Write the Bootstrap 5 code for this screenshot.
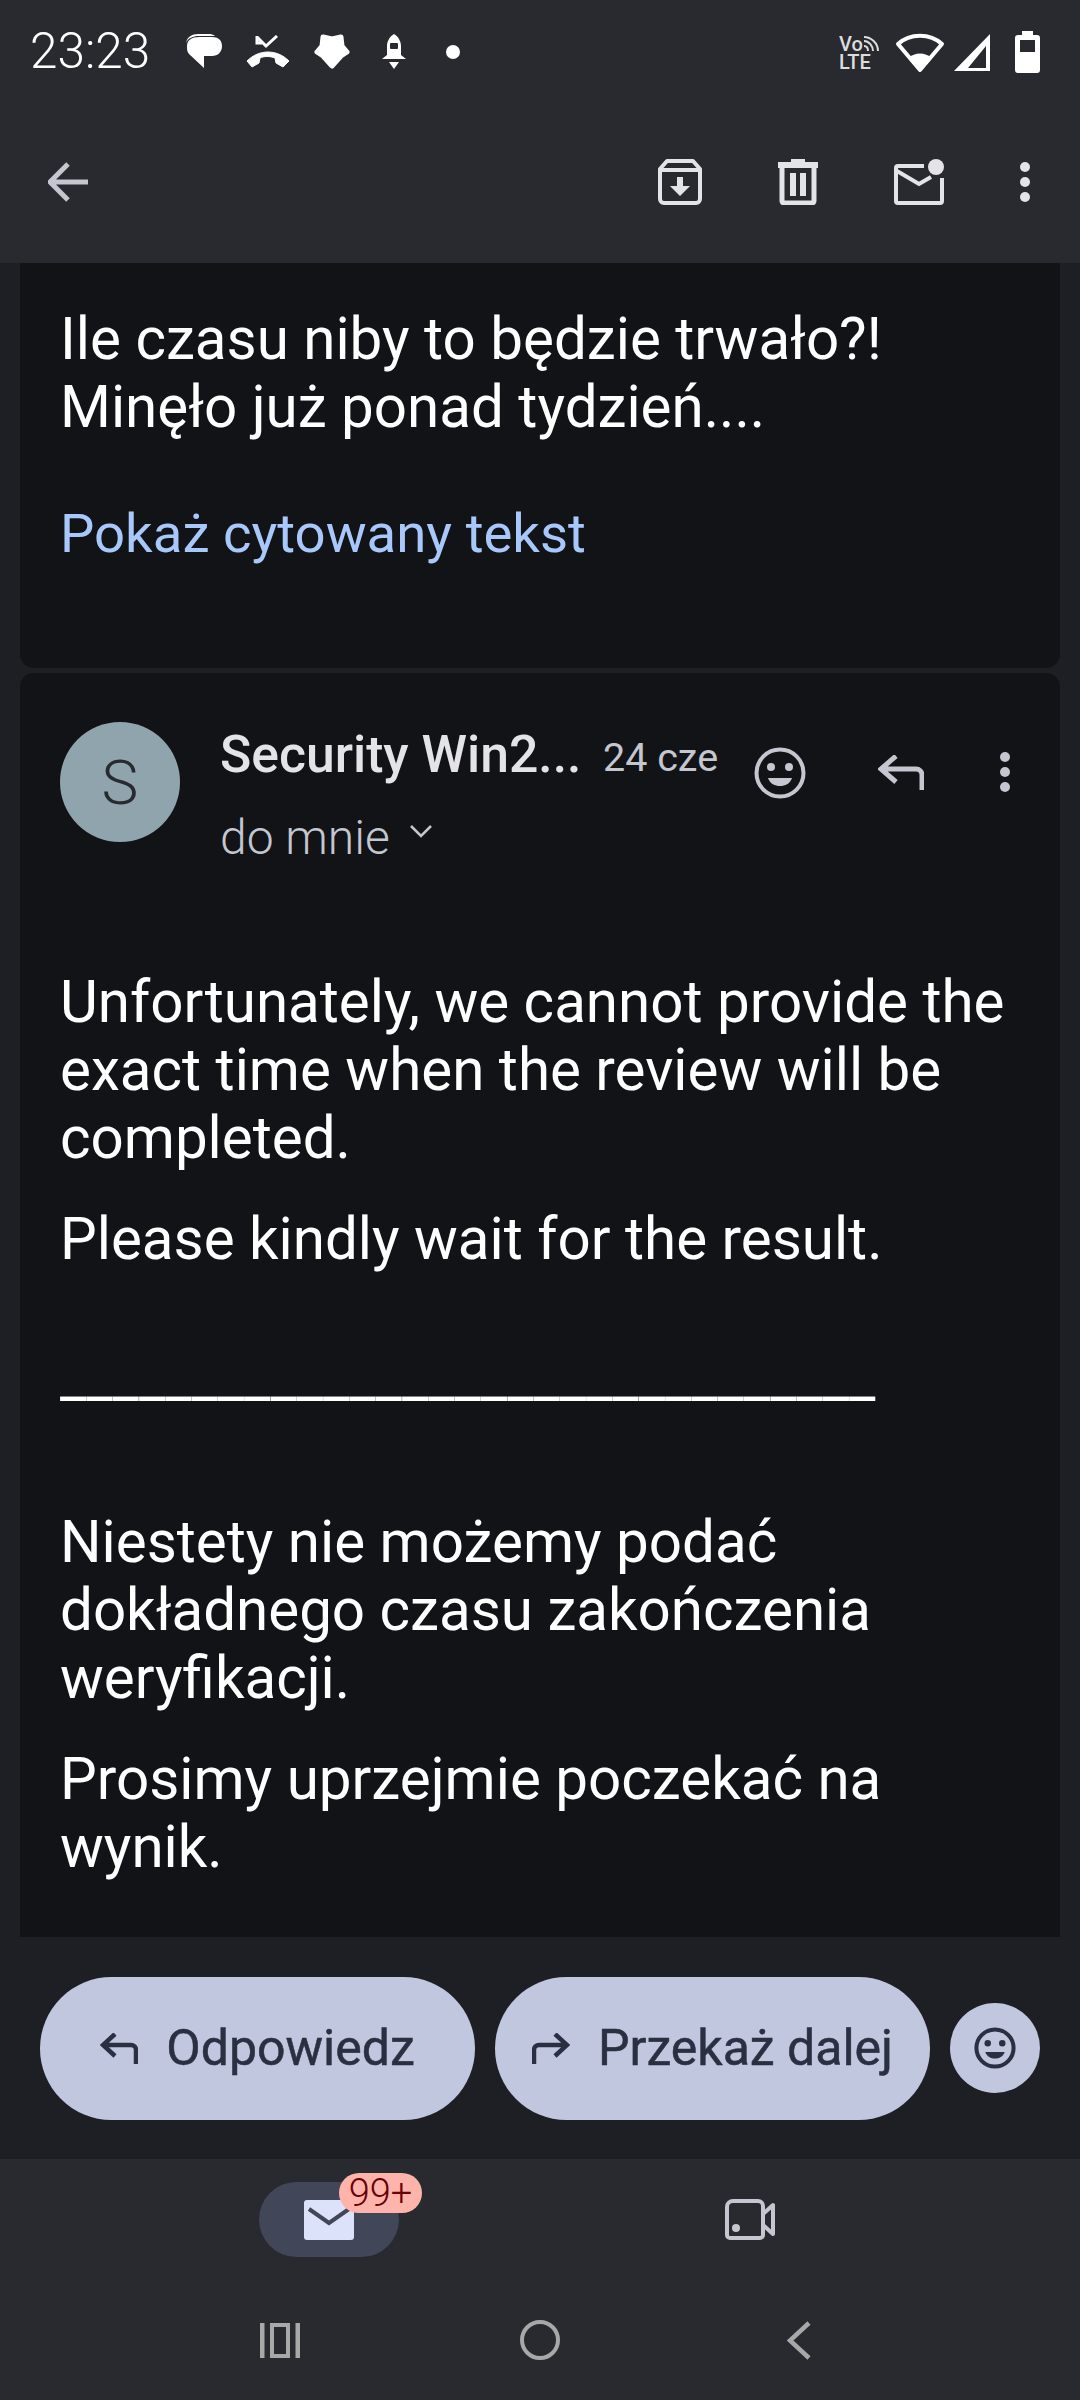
<!DOCTYPE html>
<html lang="pl">
<head>
<meta charset="UTF-8">
<meta name="viewport" content="width=device-width, initial-scale=1.0">
<title>Gmail - wiadomość</title>
<link rel="stylesheet" href="https://cdn.jsdelivr.net/npm/bootstrap@5.3.0/dist/css/bootstrap.min.css">
<style>
html, body { background: #1e1f24; }
body { width: 1080px; height: 2400px; overflow: hidden; font-family: Roboto, "Liberation Sans", sans-serif; color: #fff; }
.top-area { background: #292a2f; height: 263px; flex: none; }
.status-row { height: 103px; padding: 0 40px 0 30px; }
.clock { font-size: 49.5px; font-weight: 300; line-height: 1; width: 156px; }
.status-icons { gap: 24px; }
.tool-row { height: 160px; padding: 0 50px 2px 48px; }
.tool-icons { gap: 76px; }
.mail-list { flex: 1 1 auto; min-height: 0; padding: 0 20px; gap: 5px; overflow: hidden; }
.msg-card { background: #121317; }
.msg-one { height: 405px; padding: 42px 40px 0 40px; border-radius: 0 0 14px 14px; flex: none; }
.msg-two { flex: 1 1 auto; padding: 49px 30px 0 40px; border-radius: 14px 14px 0 0; min-height: 0; }
.mail-text { font-size: 58.3px; line-height: 68px; margin: 0; color: #fff; }
.quoted { font-size: 54.5px; line-height: 68px; color: #a8c7fa; margin-top: 58px; }
.avatar-s { width: 120px; height: 120px; background: #90a4ae; color: #292a2f; font-size: 62px; font-weight: 300; flex: none; }
.sender { margin-left: 40px; width: 534px; flex: none; padding-top: 3px; }
.name-row { height: 60px; }
.sender-name { font-size: 51.7px; font-weight: 500; color: #e3e3e8; line-height: 60px; white-space: nowrap; width: 383px; flex: none; }
.sender-date { font-size: 39.5px; color: #c4c6d0; line-height: 60px; white-space: nowrap; padding-top: 3px; }
.sender-to { font-size: 48px; color: #c4c6d0; font-weight: 300; line-height: 60px; margin-top: 23px; }
.to-chevron { margin-left: 20px; margin-top: 16px; vertical-align: top; }
.head-box { height: 120px; }
.head-smile { margin-top: 25px; flex: none; }
.head-reply { margin: 33px 0 0 72px; flex: none; }
.head-dots { margin: 30px 0 0 76px; flex: none; }
.first-para { margin-top: 126px; }
.bar-line { margin-top: 70px; }
.block-gap { margin-top: 33px; }
.big-gap { margin-top: 97px; }
.action-row { height: 222px; flex: none; padding: 40px 40px 0; gap: 20px; background: #1e1f24; }
.pill-btn { width: 435px; height: 143px; border-radius: 72px; background: #c0c7de; color: #2a3042; font-size: 50px; font-weight: 400; -webkit-text-stroke: 0.5px #2a3042; gap: 28px; flex: none; }
.pill-btn:hover { background: #c0c7de; color: #2a3042; }
.smile-btn { width: 90px; height: 90px; background: #c0c7de; margin-top: 26px; flex: none; }
.tab-row { height: 241px; background: #292a2f; flex: none; }
.tabs-top { padding: 23px 0 0 259px; height: 98px; }
.mail-pill { width: 140px; height: 75px; background: #414659; border-radius: 38px; }
.mail-badge { position: absolute; left: 80px; top: -9px; width: 83px; height: 40px; background: #ffb4ab; color: #690005; font-size: 38px; line-height: 40px; border-radius: 20px; text-align: center; font-weight: 300; }
.video-tab { margin: 17px 0 0 326px; flex: none; }
.sys-row { padding: 63px 0 0 260px; }
.sys-home { margin-left: 220px; }
.sys-back { margin-left: 227px; margin-top: 1px; }
.sys-recent { margin-top: 3px; }
</style>
</head>
<body class="d-flex flex-column">

<div class="top-area d-flex flex-column">
    <div class="status-row d-flex align-items-center">
        <div class="clock">23:23</div>
        <div class="status-icons d-flex align-items-center">
            <svg width="36" height="36" viewBox="0 0 36 36"><path d="M13 3h13c6 0 10 3 10 9s-4 10-10 10h-8v12L3 20C1 18 1 15 1 12 1 6 6 3 13 3z" fill="#fff"/><path d="M0 9C1 3 6 0 12 0h12c2 0 4 1 5 2H13C7 2 2 4 0 9z" fill="#fff"/></svg>
            <svg width="44" height="34" viewBox="0 0 44 34"><path d="M1 26c12-12 30-12 42 0l-6 6-7-4-1-5c-5-2-11-2-15 0l-1 5-7 4z" fill="#fff" stroke="#fff" stroke-linejoin="round"/><path d="M11 1v7h6M11 8l0-7M11 2l9 9 11-10" fill="none" stroke="#fff" stroke-width="3"/></svg>
            <svg width="36" height="38" viewBox="0 0 36 38"><path d="M9 4l9 2 9-2 1 9 5 6-6 4-9 10-9-10-6-4 5-6z" fill="#fff" stroke="#fff" stroke-width="5" stroke-linejoin="round"/></svg>
            <svg class="ms-2" width="24" height="36" viewBox="0 0 24 36"><path d="M12 0c5 3 7 8 7 12v9l5 4H0l5-4v-9c0-4 2-9 7-12z" fill="#fff"/><rect x="8" y="9" width="8" height="6" rx="1" fill="#292a2f"/><path d="M7 28h10l-5 7z" fill="#fff"/></svg>
            <svg class="ms-3" width="14" height="14" viewBox="0 0 14 14"><circle cx="7" cy="7" r="7" fill="#fff"/></svg>
        </div>
        <div class="ms-auto d-flex align-items-center gap-2">
            <svg width="40" height="44" viewBox="0 0 40 44"><text font-family="Roboto" font-size="20" font-weight="500" fill="#ddd"><tspan x="0" y="21">Vo</tspan><tspan x="0" y="39">LTE</tspan></text><path d="M25 7c7 0 14 6 14 14M25 11c5 0 9 5 9 10M25 16c3 0 4 2 4 5" fill="none" stroke="#ddd" stroke-width="2"/></svg>
            <svg class="ms-2" width="50" height="42" viewBox="0 0 50 42"><path d="M25 39L3 13C15 2 35 2 47 13z" fill="none" stroke="#fff" stroke-width="4" stroke-linejoin="round"/><path d="M25 41L13 27c7-6 17-6 24 0z" fill="#fff"/></svg>
            <svg width="38" height="40" viewBox="0 0 38 40"><path d="M37 2v37H1zM15 36h18V14z" fill="#fff" fill-rule="evenodd"/></svg>
            <svg class="ms-3" width="25" height="42" viewBox="0 0 25 42"><path d="M7 0h11v4h4c2 0 3 1 3 3v32c0 2-1 3-3 3H3c-2 0-3-1-3-3V7c0-2 1-3 3-3h4z" fill="#fff"/><rect x="5" y="9" width="15" height="12" fill="#292a2f"/></svg>
        </div>
    </div>
    <div class="tool-row d-flex align-items-center justify-content-between">
        <svg width="40" height="40" viewBox="0 0 40 40"><path d="M40 20H3M20 2L2 20l18 18" fill="none" stroke="#c4c6d0" stroke-width="5"/></svg>
        <div class="tool-icons d-flex align-items-center">
            <svg width="44" height="46" viewBox="0 0 44 46"><path d="M9 2h26l7 8v30a4 4 0 0 1-4 4H6a4 4 0 0 1-4-4V10z" fill="none" stroke="#e3e3e8" stroke-width="4" stroke-linejoin="round"/><path d="M3 11h38" stroke="#e3e3e8" stroke-width="4"/><path d="M19 18h6v9h7L22 37 12 27h7z" fill="#e3e3e8"/></svg>
            <svg width="40" height="46" viewBox="0 0 40 46"><path d="M13 0h14v3h13v6H0V3h13z" fill="#e3e3e8"/><path d="M4 8v34a2 2 0 0 0 2 2h28a2 2 0 0 0 2-2V8" fill="none" stroke="#e3e3e8" stroke-width="5"/><path d="M12 14h6v23h-6zM22 14h6v23h-6z" fill="#e3e3e8"/></svg>
            <svg width="50" height="46" viewBox="0 0 50 46"><path d="M30 7H4a2 2 0 0 0-2 2v33a2 2 0 0 0 2 2h42a2 2 0 0 0 2-2V19" fill="none" stroke="#e3e3e8" stroke-width="4"/><path d="M3 12l22 13 12-7" fill="none" stroke="#e3e3e8" stroke-width="4"/><circle cx="42" cy="8" r="8" fill="#e3e3e8"/></svg>
            <svg width="10" height="40" viewBox="0 0 10 40"><circle cx="5" cy="5" r="5" fill="#e3e3e8"/><circle cx="5" cy="20" r="5" fill="#e3e3e8"/><circle cx="5" cy="35" r="5" fill="#e3e3e8"/></svg>
        </div>
    </div>
</div>

<div class="mail-list d-flex flex-column">
    <div class="msg-card msg-one">
        <p class="mail-text">Ile czasu niby to będzie trwało?!<br>Minęło już ponad tydzień....</p>
        <div class="quoted">Pokaż cytowany tekst</div>
    </div>
    <div class="msg-card msg-two">
        <div class="head-box d-flex">
            <div class="avatar-s rounded-circle d-flex align-items-center justify-content-center">S</div>
            <div class="sender">
                <div class="name-row d-flex">
                    <div class="sender-name">Security Win2...</div>
                    <div class="sender-date">24 cze</div>
                </div>
                <div class="sender-to">do mnie<svg class="to-chevron" width="22" height="14" viewBox="0 0 22 14"><path d="M1 2l10 10L21 2" fill="none" stroke="#c4c6d0" stroke-width="2.500"/></svg></div>
            </div>
            <svg class="head-smile" width="52" height="52" viewBox="0 0 52 52"><circle cx="26" cy="26" r="23.500" fill="none" stroke="#c4c6d0" stroke-width="4"/><circle cx="17" cy="20" r="4" fill="#c4c6d0"/><circle cx="35" cy="20" r="4" fill="#c4c6d0"/><path d="M14 31h24c-2 6-7 8-12 8s-10-2-12-8z" fill="#c4c6d0"/></svg>
            <svg class="head-reply" width="46" height="36" viewBox="0 0 46 36"><path d="M44 35V20a6 6 0 0 0-6-6H4M18 1L3 14l15 13" fill="none" stroke="#c4c6d0" stroke-width="5"/></svg>
            <svg class="head-dots" width="10" height="40" viewBox="0 0 10 40"><circle cx="5" cy="5" r="5" fill="#c4c6d0"/><circle cx="5" cy="20" r="5" fill="#c4c6d0"/><circle cx="5" cy="35" r="5" fill="#c4c6d0"/></svg>
        </div>
        <p class="mail-text first-para">Unfortunately, we cannot provide the exact time when the review will be completed.</p>
        <p class="mail-text block-gap">Please kindly wait for the result.</p>
        <p class="mail-text bar-line">_______________________________</p>
        <p class="mail-text big-gap">Niestety nie możemy podać dokładnego czasu zakończenia weryfikacji.</p>
        <p class="mail-text block-gap">Prosimy uprzejmie poczekać na wynik.</p>
    </div>
</div>

<div class="action-row d-flex">
    <button class="btn pill-btn d-flex align-items-center justify-content-center border-0 p-0">
        <svg width="38" height="32" viewBox="0 0 38 32"><path d="M36 31V17a5 5 0 0 0-5-5H3M15 1L3 12l12 11" fill="none" stroke="#2a3042" stroke-width="4.500"/></svg>
        <span>Odpowiedz</span>
    </button>
    <button class="btn pill-btn d-flex align-items-center justify-content-center border-0 p-0">
        <svg width="38" height="32" viewBox="0 0 38 32"><path d="M2 31V17a5 5 0 0 1 5-5h28M23 1l12 11-12 11" fill="none" stroke="#2a3042" stroke-width="4.500"/></svg>
        <span>Przekaż dalej</span>
    </button>
    <div class="smile-btn rounded-circle d-flex align-items-center justify-content-center">
        <svg width="42" height="42" viewBox="0 0 52 52"><circle cx="26" cy="26" r="23" fill="none" stroke="#2a3042" stroke-width="5"/><circle cx="17" cy="20" r="4" fill="#2a3042"/><circle cx="35" cy="20" r="4" fill="#2a3042"/><path d="M14 31h24c-2 6-7 8-12 8s-10-2-12-8z" fill="#2a3042"/></svg>
    </div>
</div>

<div class="tab-row">
    <div class="tabs-top d-flex">
        <div class="mail-pill position-relative d-flex align-items-center justify-content-center">
            <svg width="50" height="40" viewBox="0 0 50 40"><rect width="50" height="40" rx="3" fill="#dce2f9"/><path d="M5 9l20 14 20-14" fill="none" stroke="#414659" stroke-width="4"/></svg>
            <div class="mail-badge">99+</div>
        </div>
        <svg class="video-tab" width="50" height="41" viewBox="0 0 50 41"><path d="M8 2h25a5 5 0 0 1 5 5v29a3 3 0 0 1-3 3H5a3 3 0 0 1-3-3V8a6 6 0 0 1 6-6z" fill="none" stroke="#c4c6d0" stroke-width="4"/><circle cx="11" cy="29" r="4" fill="#c4c6d0"/><path d="M38 15l10-9v29l-10-9" fill="none" stroke="#c4c6d0" stroke-width="4" stroke-linejoin="round"/></svg>
    </div>
    <div class="sys-row d-flex align-items-start">
        <svg class="sys-recent" width="40" height="35" viewBox="0 0 40 35"><path d="M2 0v35M38 0v35" stroke="#a8a8a8" stroke-width="5"/><rect x="12" y="2" width="16" height="31" fill="none" stroke="#a8a8a8" stroke-width="4"/></svg>
        <svg class="sys-home" width="40" height="40" viewBox="0 0 40 40"><circle cx="20" cy="20" r="18" fill="none" stroke="#a8a8a8" stroke-width="4"/></svg>
        <svg class="sys-back" width="24" height="39" viewBox="0 0 24 39"><path d="M22 2L3 19.500l19 17.500" fill="none" stroke="#a8a8a8" stroke-width="4.500"/></svg>
    </div>
</div>

<script src="https://cdn.jsdelivr.net/npm/bootstrap@5.3.0/dist/js/bootstrap.bundle.min.js"></script>
</body>
</html>
